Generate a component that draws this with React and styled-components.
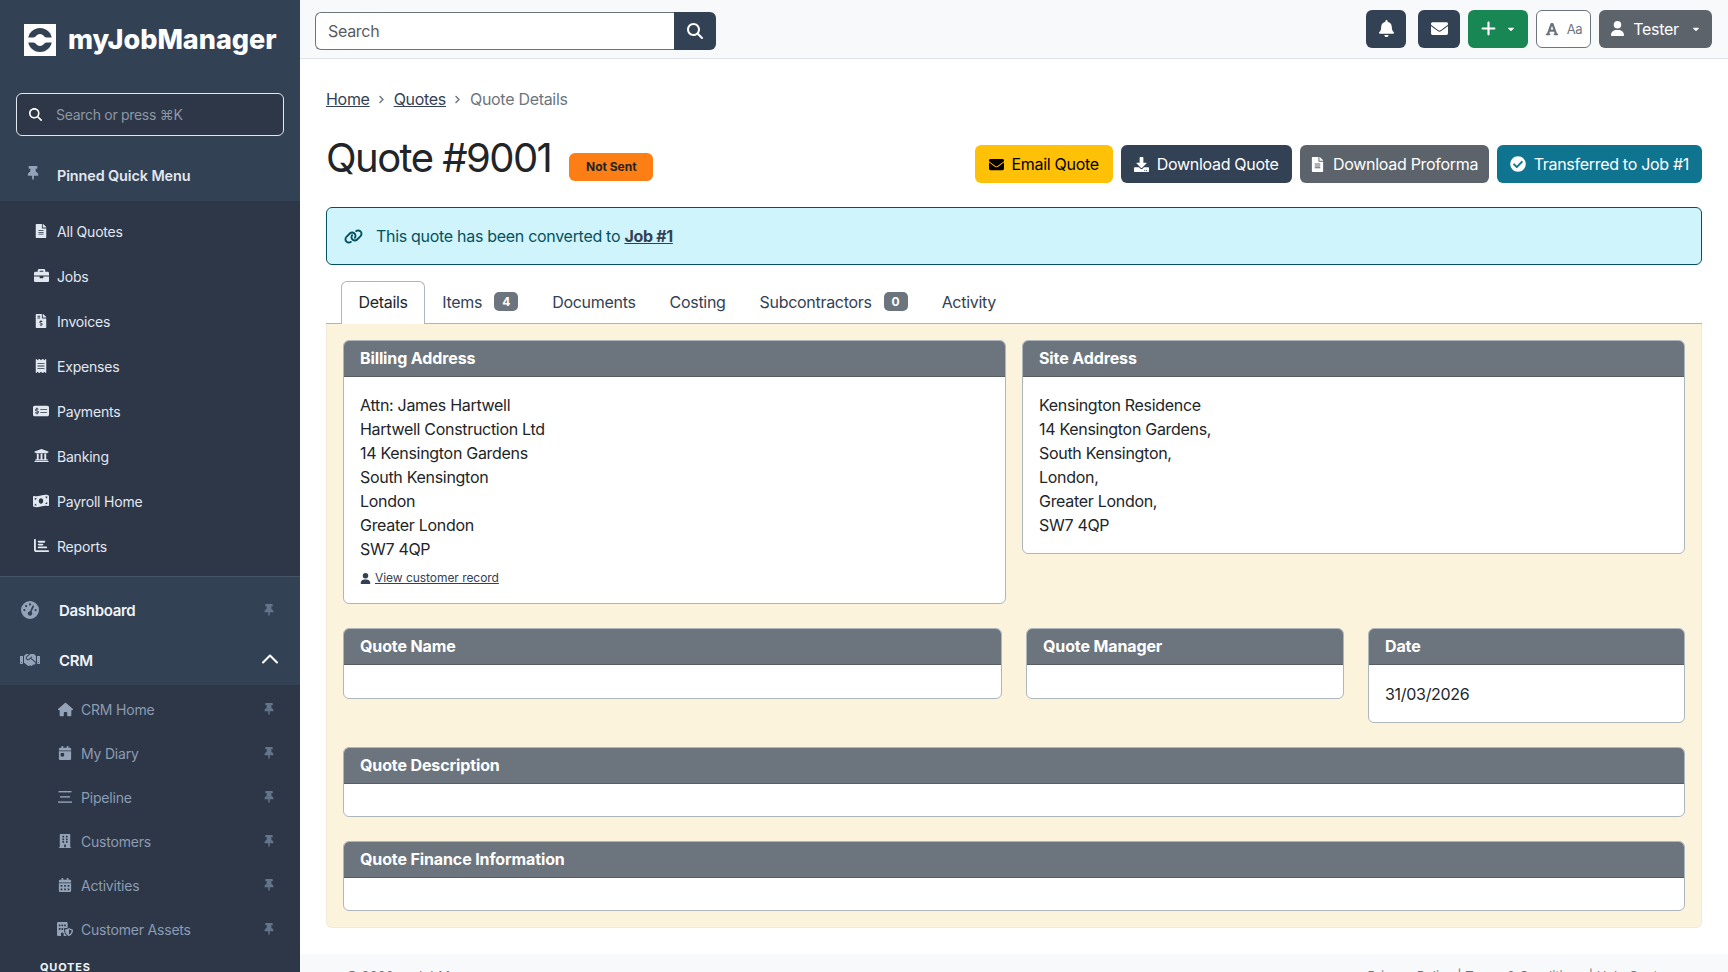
import React from "react";
import styled, { createGlobalStyle } from "styled-components";
import {
  FaThumbtack,
  FaFileAlt,
  FaBriefcase,
  FaFileInvoiceDollar,
  FaReceipt,
  FaUniversity,
  FaHandshake,
  FaCalendarDay,
  FaBuilding,
  FaCalendarAlt,
  FaBell,
  FaEnvelope,
  FaFont,
  FaDownload,
  FaCheckCircle,
  FaChevronRight,
  FaCaretDown,
} from "react-icons/fa";
import {
  FaGaugeHigh,
  FaBuildingShield,
  FaChartBar,
  FaMoneyCheckDollar,
  FaMoneyBillWave,
  FaHouse,
  FaMagnifyingGlass,
  FaPlus,
  FaUser,
  FaLink,
} from "react-icons/fa6";
import { ChevronUp } from "lucide-react";

const GlobalStyle = createGlobalStyle`
  html, body {
    margin: 0;
    padding: 0;
    height: 100%;
    overflow: hidden;
    background: #fff;
    font-family: Inter, "Liberation Sans", sans-serif;
    font-size: 16px;
    letter-spacing: -0.3px;
    color: #212529;
  }
  * { box-sizing: border-box; }
`;

const PipelineIcon = () => (
  <svg width="14" height="12" viewBox="0 0 14 12" fill="currentColor">
    <rect x="0.5" y="0" width="13" height="1.4" />
    <rect x="2" y="5.2" width="10" height="1.4" />
    <rect x="0" y="10.4" width="14" height="1.4" />
  </svg>
);

const quickItems = [
  { label: "All Quotes", icon: <FaFileAlt size={14} /> },
  { label: "Jobs", icon: <FaBriefcase size={15} /> },
  { label: "Invoices", icon: <FaFileInvoiceDollar size={14} /> },
  { label: "Expenses", icon: <FaReceipt size={14} /> },
  { label: "Payments", icon: <FaMoneyCheckDollar size={16} /> },
  { label: "Banking", icon: <FaUniversity size={15} /> },
  { label: "Payroll Home", icon: <FaMoneyBillWave size={16} /> },
  { label: "Reports", icon: <FaChartBar size={15} /> },
];

const crmItems = [
  { label: "CRM Home", icon: <FaHouse size={15} /> },
  { label: "My Diary", icon: <FaCalendarDay size={14} /> },
  { label: "Pipeline", icon: <PipelineIcon /> },
  { label: "Customers", icon: <FaBuilding size={14} /> },
  { label: "Activities", icon: <FaCalendarAlt size={14} /> },
  { label: "Customer Assets", icon: <FaBuildingShield size={16} /> },
];

const tabs = [
  { label: "Details", active: true },
  { label: "Items", count: 4 },
  { label: "Documents" },
  { label: "Costing" },
  { label: "Subcontractors", count: 0 },
  { label: "Activity" },
];

const billingLines = [
  "Attn: James Hartwell",
  "Hartwell Construction Ltd",
  "14 Kensington Gardens",
  "South Kensington",
  "London",
  "Greater London",
  "SW7 4QP",
];

const siteLines = [
  "Kensington Residence",
  "14 Kensington Gardens,",
  "South Kensington,",
  "London,",
  "Greater London,",
  "SW7 4QP",
];

const App = () => {
  return (
    <Shell>
      <GlobalStyle />
      <Sidebar>
        <Brand>
          <LogoMark viewBox="0 0 32 32">
            <rect width="32" height="32" fill="#fff" />
            <circle cx="16" cy="16" r="12" fill="#334155" />
            <path d="M4 13.500h5.500c2 0 3.500-3.500 6.500-3.500s4.500 3.500 6.500 3.500H28v5h-5.500c-2 0-3.500 3.500-6.500 3.500s-4.500-3.500-6.500-3.500H4z" fill="#fff" />
          </LogoMark>
          <LogoText>myJobManager</LogoText>
        </Brand>
        <SideSearch>
          <FaMagnifyingGlass size={13} color="#fff" />
          <span>Search or press ⌘K</span>
        </SideSearch>
        <PinnedHead>
          <FaThumbtack size={14} />
          <span>Pinned Quick Menu</span>
        </PinnedHead>
        <QuickList>
          {quickItems.map((item) => (
            <QuickRow key={item.label}>
              <QuickIcon>{item.icon}</QuickIcon>
              {item.label}
            </QuickRow>
          ))}
        </QuickList>
        <TopLink $first>
          <TopIcon>
            <FaGaugeHigh size={18} />
          </TopIcon>
          <TopLabel>Dashboard</TopLabel>
          <PinIcon>
            <FaThumbtack size={12} />
          </PinIcon>
        </TopLink>
        <TopLink>
          <TopIcon>
            <FaHandshake size={20} />
          </TopIcon>
          <TopLabel>CRM</TopLabel>
          <Chevron>
            <ChevronUp size={28} color="#fff" strokeWidth={1.8} />
          </Chevron>
        </TopLink>
        <SubList>
          {crmItems.map((item) => (
            <SubRow key={item.label}>
              <SubIcon>{item.icon}</SubIcon>
              <SubLabel>{item.label}</SubLabel>
              <PinIcon>
                <FaThumbtack size={12} />
              </PinIcon>
            </SubRow>
          ))}
          <SubHeading>QUOTES</SubHeading>
        </SubList>
      </Sidebar>

      <Main>
        <TopBar>
          <SearchGroup>
            <SearchInput>Search</SearchInput>
            <SearchButton>
              <FaMagnifyingGlass size={16} />
            </SearchButton>
          </SearchGroup>
          <TopActions>
            <TopButton $w={40} $bg="#334155">
              <FaBell size={17} />
            </TopButton>
            <TopButton $w={42} $bg="#334155">
              <FaEnvelope size={17} />
            </TopButton>
            <TopButton $w={60} $bg="#198754" $gap={9}>
              <FaPlus size={17} />
              <FaCaretDown size={10} />
            </TopButton>
            <FontButton>
              <FaFont size={14} />
              <small>Aa</small>
            </FontButton>
            <TopButton $w={113} $bg="#5c636a" $gap={8}>
              <FaUser size={15} />
              <span>Tester</span>
              <Caret>
                <FaCaretDown size={10} />
              </Caret>
            </TopButton>
          </TopActions>
        </TopBar>

        <Content>
          <Breadcrumb>
            <Crumb href="#">Home</Crumb>
            <FaChevronRight size={9} />
            <Crumb href="#">Quotes</Crumb>
            <FaChevronRight size={9} />
            <span>Quote Details</span>
          </Breadcrumb>

          <TitleRow>
            <TitleGroup>
              <Title>Quote #9001</Title>
              <StatusBadge>Not Sent</StatusBadge>
            </TitleGroup>
            <HeaderActions>
              <ActionButton $bg="#ffc107" $fg="#000" $px={14}>
                <FaEnvelope size={15} />
                Email Quote
              </ActionButton>
              <ActionButton $bg="#334155" $fg="#fff">
                <FaDownload size={15} />
                Download Quote
              </ActionButton>
              <ActionButton $bg="#5c636a" $fg="#fff" $px={10.5}>
                <FaFileAlt size={15} />
                Download Proforma
              </ActionButton>
              <ActionButton $bg="#0f7490" $fg="#fff">
                <FaCheckCircle size={16} />
                Transferred to Job #1
              </ActionButton>
            </HeaderActions>
          </TitleRow>

          <Alert>
            <FaLink size={19} />
            <span>
              This quote has been converted to <AlertLink href="#">Job #1</AlertLink>
            </span>
          </Alert>

          <TabBar>
            {tabs.map((tab) => (
              <Tab key={tab.label} $active={tab.active}>
                {tab.label}
                {tab.count !== undefined && <TabCount>{tab.count}</TabCount>}
              </Tab>
            ))}
          </TabBar>

          <Panel>
            <AddressRow>
              <Card>
                <CardHead>Billing Address</CardHead>
                <CardBody>
                  {billingLines.map((line) => (
                    <div key={line}>{line}</div>
                  ))}
                  <RecordLink>
                    <FaUser size={11} />
                    <a href="#">View customer record</a>
                  </RecordLink>
                </CardBody>
              </Card>
              <Card>
                <CardHead>Site Address</CardHead>
                <CardBody>
                  {siteLines.map((line) => (
                    <div key={line}>{line}</div>
                  ))}
                </CardBody>
              </Card>
            </AddressRow>

            <MetaRow>
              <Card>
                <CardHead>Quote Name</CardHead>
                <EmptyBody $h={33} />
              </Card>
              <Card>
                <CardHead>Quote Manager</CardHead>
                <EmptyBody $h={33} />
              </Card>
              <Card>
                <CardHead>Date</CardHead>
                <DateBody>31/03/2026</DateBody>
              </Card>
            </MetaRow>

            <Card>
              <CardHead>Quote Description</CardHead>
              <EmptyBody $h={32} />
            </Card>
            <Card>
              <CardHead>Quote Finance Information</CardHead>
              <EmptyBody $h={32} />
            </Card>
          </Panel>
        </Content>

        <Footer>
          <span>© 2026 myJobManager</span>
          <span>Privacy Policy | Terms &amp; Conditions | Help Centre</span>
        </Footer>
      </Main>
    </Shell>
  );
};

const Shell = styled.div`
  display: flex;
  height: 100vh;
  overflow: hidden;
`;

const Sidebar = styled.aside`
  flex: 0 0 300px;
  height: 100vh;
  overflow: hidden;
  background: #334155;
  display: flex;
  flex-direction: column;
  letter-spacing: -0.2px;
`;

const Brand = styled.div`
  flex: none;
  display: flex;
  gap: 12px;
  padding: 24px 24px 0;
  height: 93px;
  align-items: flex-start;
`;

const LogoMark = styled.svg`
  width: 32px;
  height: 32px;
  flex: none;
`;

const LogoText = styled.span`
  font-family: Inter, sans-serif;
  font-size: 27px;
  line-height: 32px;
  font-weight: 800;
  letter-spacing: 0;
  color: #fff;
`;

const SideSearch = styled.div`
  margin: 0 16px;
  height: 43px;
  flex: none;
  display: flex;
  align-items: center;
  gap: 14px;
  padding: 0 12px;
  background: #2d3748;
  border: 1px solid #e2e8f0;
  border-radius: 6px;
  font-size: 14px;
  letter-spacing: -0.3px;
  color: #8d96a3;
`;

const PinnedHead = styled.div`
  height: 65px;
  flex: none;
  display: flex;
  align-items: center;
  gap: 17px;
  padding: 14px 0 0 26px;
  font-size: 14.4px;
  font-weight: 600;
  letter-spacing: -0.1px;
  color: #e2e8f0;

  svg {
    color: #94a3b8;
    transform: translateY(-3px);
  }
`;

const QuickList = styled.div`
  flex: none;
  height: 376px;
  padding-top: 8px;
  background: #2d3748;
  border-bottom: 1px solid #475569;
`;

const QuickRow = styled.div`
  height: 45px;
  display: flex;
  align-items: center;
  font-size: 14px;
  color: #e2e8f0;
`;

const QuickIcon = styled.span`
  width: 24px;
  margin: 0 4px 0 29px;
  display: flex;
  justify-content: center;
  transform: translateY(-1px);
  color: #e2e8f0;
`;

const TopLink = styled.div`
  flex: none;
  height: 50px;
  margin-top: ${(p) => (p.$first ? "8px" : "0")};
  display: flex;
  align-items: center;
  padding: 0 24px 0 20px;
  color: #fff;
`;

const TopIcon = styled.span`
  width: 20px;
  display: flex;
  justify-content: center;
  color: #94a3b8;
`;

const TopLabel = styled.span`
  flex: 1;
  margin-left: 19px;
  font-size: 15px;
  font-weight: 600;
  letter-spacing: -0.3px;
  color: #f1f5f9;
`;

const PinIcon = styled.span`
  display: flex;
  margin-right: 1px;
  color: #64748b;
`;

const Chevron = styled.span`
  display: flex;
  margin-right: -8px;
  transform: translateY(-1px);
`;

const SubList = styled.div`
  flex: none;
  background: #2d3748;
  padding-top: 2px;
  padding-bottom: 40px;
`;

const SubRow = styled.div`
  height: 44px;
  display: flex;
  align-items: center;
  padding-right: 24px;
  font-size: 14px;
  color: #8c9cb2;
`;

const SubIcon = styled.span`
  width: 20px;
  margin: 0 6px 0 55px;
  display: flex;
  justify-content: center;
  color: #94a3b8;
`;

const SubLabel = styled.span`
  flex: 1;
`;

const SubHeading = styled.div`
  margin: 9px 0 0 40px;
  font-size: 11px;
  font-weight: 700;
  letter-spacing: 0.8px;
  color: #f1f5f9;
`;

const Main = styled.main`
  flex: 1;
  min-width: 0;
  height: 100vh;
  overflow: hidden;
`;

const TopBar = styled.header`
  height: 59px;
  display: flex;
  align-items: center;
  justify-content: space-between;
  padding: 0 16px 0 15px;
  background: #f8f9fa;
  border-bottom: 1px solid #dee2e6;
`;

const SearchGroup = styled.div`
  display: flex;
  height: 38px;
  width: 401px;
  margin-top: 4px;
`;

const SearchInput = styled.div`
  flex: 1;
  display: flex;
  align-items: center;
  padding: 0 12px;
  background: #fff;
  border: 1px solid #6c757d;
  border-right: 0;
  border-radius: 6px 0 0 6px;
  color: #595c5f;
`;

const SearchButton = styled.div`
  width: 42px;
  display: flex;
  align-items: center;
  justify-content: center;
  background: #334155;
  border-radius: 0 6px 6px 0;
  color: #fff;
`;

const TopActions = styled.div`
  display: flex;
  align-items: center;
  margin-top: -1px;
  gap: 8px;
`;

const TopButton = styled.div`
  width: ${(p) => p.$w}px;
  height: 38px;
  margin-left: ${(p) => (p.$w === 42 ? "4px" : "0")};
  display: flex;
  align-items: center;
  justify-content: center;
  gap: ${(p) => p.$gap || 0}px;
  background: ${(p) => p.$bg};
  border-radius: 6px;
  color: #fff;
`;

const Caret = styled.span`
  display: flex;
  margin-left: 4px;
`;

const FontButton = styled.div`
  width: 55px;
  height: 38px;
  display: flex;
  align-items: center;
  justify-content: center;
  gap: 8px;
  background: #fff;
  border: 1px solid #6c757d;
  border-radius: 6px;
  color: #6c757d;

  small {
    font-size: 13px;
  }
`;

const Content = styled.div`
  padding: 0 26px 26px;
`;

const Breadcrumb = styled.nav`
  height: 24px;
  margin-top: 28px;
  display: flex;
  align-items: center;
  gap: 7px;
  color: #6c757d;

  svg {
    color: #6c757d;
    margin: 0 0.5px;
  }
`;

const Crumb = styled.a`
  color: #334155;
`;

const TitleRow = styled.div`
  margin-top: 23px;
  height: 73px;
  display: flex;
  align-items: flex-start;
  justify-content: space-between;
`;

const TitleGroup = styled.div`
  display: flex;
  align-items: center;
  gap: 18px;
`;

const Title = styled.h1`
  margin: 0;
  font-size: 40px;
  line-height: 48px;
  font-weight: 400;
  letter-spacing: -1.55px;
  color: #212529;
`;

const StatusBadge = styled.span`
  width: 84px;
  height: 28px;
  margin-top: 17px;
  display: flex;
  align-items: center;
  justify-content: center;
  background: #fd7e14;
  border-radius: 6px;
  font-size: 12px;
  font-weight: 700;
  letter-spacing: 0;
  color: #212529;
`;

const HeaderActions = styled.div`
  display: flex;
  gap: 8px;
  margin-top: 11px;
`;

const ActionButton = styled.div`
  height: 38px;
  display: flex;
  align-items: center;
  gap: 8px;
  padding: 0 ${(p) => p.$px || 13}px;
  background: ${(p) => p.$bg};
  border-radius: 6px;
  color: ${(p) => p.$fg};
`;

const Alert = styled.div`
  height: 58px;
  display: flex;
  align-items: center;
  gap: 13px;
  padding: 0 17px;
  background: #cff4fc;
  border: 1px solid #055160;
  border-radius: 6px;
  color: #055160;
`;

const AlertLink = styled.a`
  font-weight: 700;
  color: #334155;
`;

const TabBar = styled.div`
  margin-top: 16px;
  padding-left: 15px;
  display: flex;
  height: 43px;
  border-bottom: 1px solid #adb5bd;
`;

const Tab = styled.div`
  display: flex;
  align-items: center;
  gap: 12px;
  padding: 0 ${(p) => (p.$active ? "16.5px" : "16px")} 2px;
  color: ${(p) => (p.$active ? "#212529" : "#334155")};
  background: ${(p) => (p.$active ? "#fff" : "transparent")};
  border: 1px solid ${(p) => (p.$active ? "#adb5bd" : "transparent")};
  border-bottom: 0;
  border-radius: 6px 6px 0 0;
  margin-bottom: ${(p) => (p.$active ? "-1px" : "0")};
  height: ${(p) => (p.$active ? "43px" : "42px")};
`;

const TabCount = styled.span`
  min-width: 24px;
  height: 19px;
  display: flex;
  align-items: center;
  justify-content: center;
  background: #6c757d;
  border-radius: 5px;
  font-size: 12px;
  font-weight: 700;
  letter-spacing: 0;
  color: #fff;
`;

const Panel = styled.section`
  padding: 16px;
  display: flex;
  flex-direction: column;
  gap: 24px;
  background: #fcf3dc;
  border: 1px solid #f1ead8;
  border-top: 0;
  border-radius: 0 0 6px 6px;
`;

const AddressRow = styled.div`
  display: grid;
  grid-template-columns: 1fr 1fr;
  gap: 16px;
  align-items: start;
`;

const MetaRow = styled.div`
  display: grid;
  grid-template-columns: 659fr 318fr 317fr;
  gap: 24px;
  align-items: start;
`;

const Card = styled.div`
  overflow: hidden;
  background: #fff;
  border: 1px solid #adb5bd;
  border-radius: 6px;
`;

const CardHead = styled.div`
  height: 36px;
  display: flex;
  align-items: center;
  padding: 0 16px 1px;
  background: #6c757d;
  border-bottom: 1px solid #565e64;
  font-weight: 700;
  letter-spacing: -0.12px;
  color: #fff;
`;

const CardBody = styled.div`
  padding: 16px;
  line-height: 24px;
`;

const EmptyBody = styled.div`
  height: ${(p) => p.$h}px;
`;

const DateBody = styled.div`
  padding: 17px 16px 0;
  height: 57px;
  line-height: 24px;
`;

const RecordLink = styled.div`
  margin-top: 8px;
  height: 18px;
  display: flex;
  align-items: center;
  gap: 4px;
  font-size: 12px;
  letter-spacing: -0.05px;
  color: #334155;

  a {
    color: #334155;
  }
`;

const Footer = styled.footer`
  margin-top: 0;
  height: 60px;
  padding: 14px 58px 0 46px;
  display: flex;
  justify-content: space-between;
  background: #f8f9fa;
  font-size: 13px;
  letter-spacing: 0;
  color: #6c757d;
`;

export default App;
